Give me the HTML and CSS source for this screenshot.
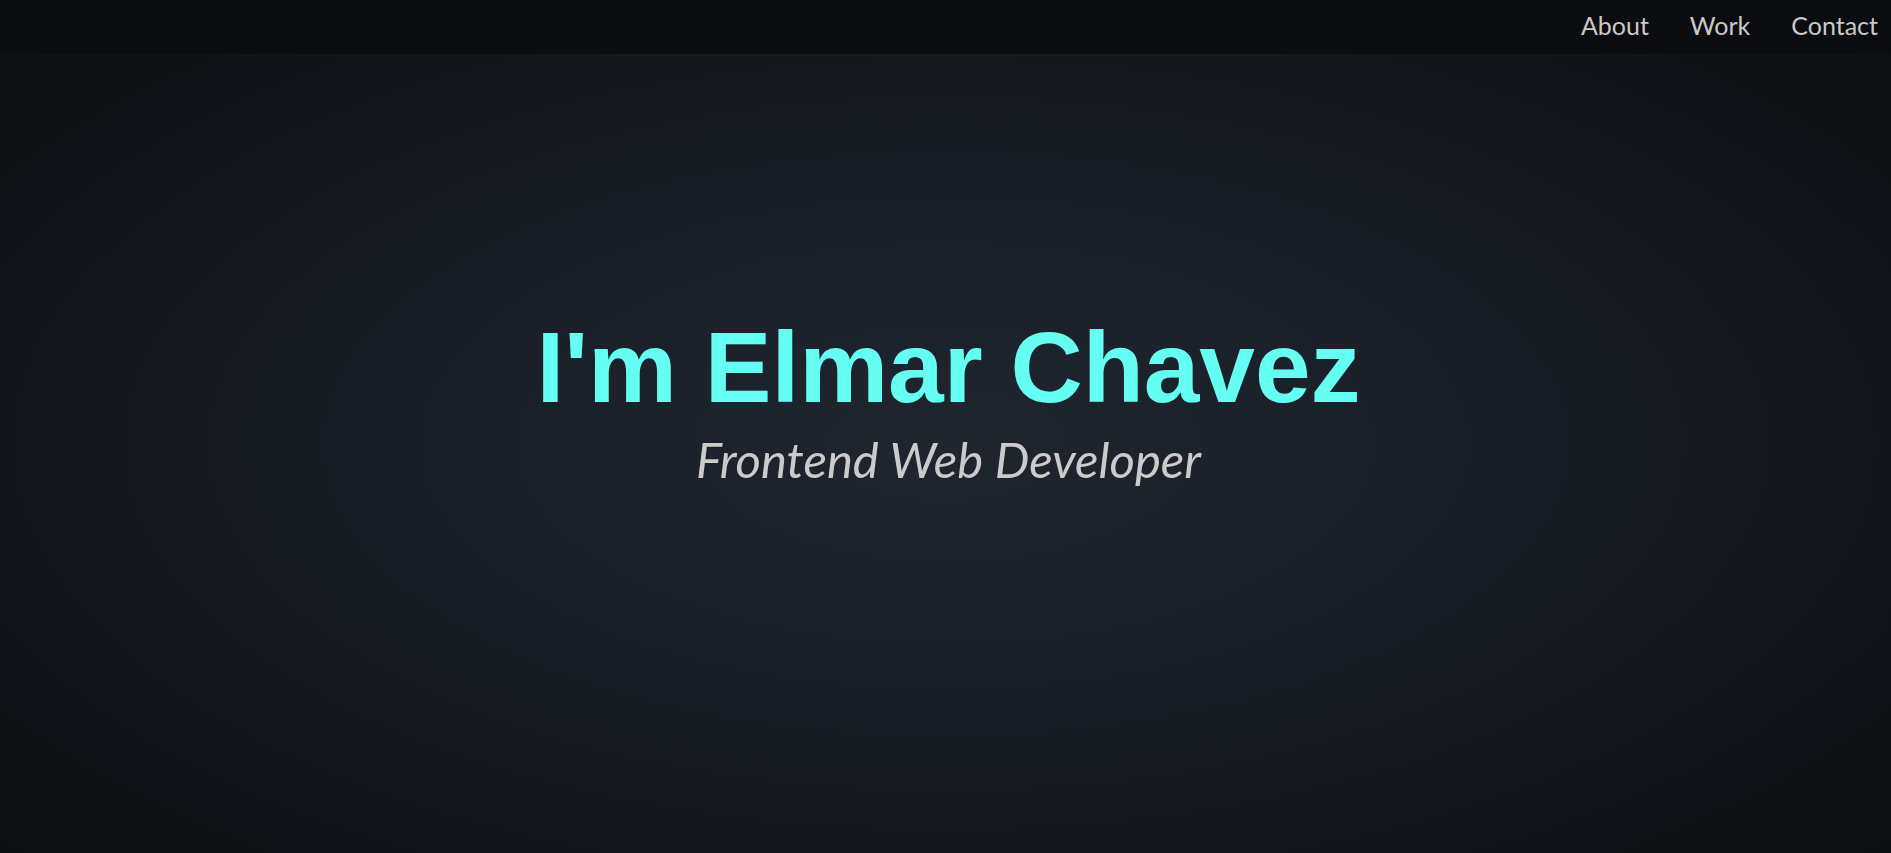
FILE: index.html
```html
<!DOCTYPE html>
<html lang="en">
<head>
<meta charset="utf-8">
<title>Elmar Chavez</title>
<link rel="stylesheet" href="styles.css">
</head>
<body>
<header class="topbar">
  <nav class="nav">
    <a class="nav-link" href="#about">About</a>
    <a class="nav-link" href="#work">Work</a>
    <a class="nav-link" href="#contact">Contact</a>
  </nav>
</header>
<main class="hero">
  <h1 class="hero-title">I'm Elmar Chavez</h1>
  <p class="hero-subtitle">Frontend Web Developer</p>
</main>
</body>
</html>
```
FILE: styles.css
```css
* { box-sizing: border-box; }
html, body { margin: 0; padding: 0; height: 100%; }
body {
  background: radial-gradient(ellipse at 50% 52%, #1f2630 0%, #1a1f28 35%, #13161c 70%, #0c0d10 100%);
  font-family: Lato, "Liberation Sans", sans-serif;
  overflow: hidden;
}
.topbar {
  position: fixed;
  top: 0; left: 0; right: 0;
  height: 54px;
  background: #0b0c10;
  z-index: 2;
}
.nav {
  display: flex;
  justify-content: flex-end;
  align-items: flex-start;
  gap: 41px;
  padding: 10px 13px 0 0;
}
.nav-link {
  color: #c9c9c9;
  text-decoration: none;
  font-size: 25px;
  line-height: 1.2;
}
.hero {
  height: 853px;
  display: flex;
  flex-direction: column;
  align-items: center;
  justify-content: center;
  padding: 0 0 54px 6px;
}
.hero-title {
  margin: 0 0 5px;
  font-family: "Liberation Sans", Arial, sans-serif;
  font-weight: 700;
  font-size: 100px;
  line-height: normal;
  color: #64fff2;
}
.hero-subtitle {
  margin: 0;
  font-family: Lato, "Liberation Sans", sans-serif;
  font-style: italic;
  font-size: 49px;
  line-height: 1.2;
  color: #cbcbcb;
}
```
